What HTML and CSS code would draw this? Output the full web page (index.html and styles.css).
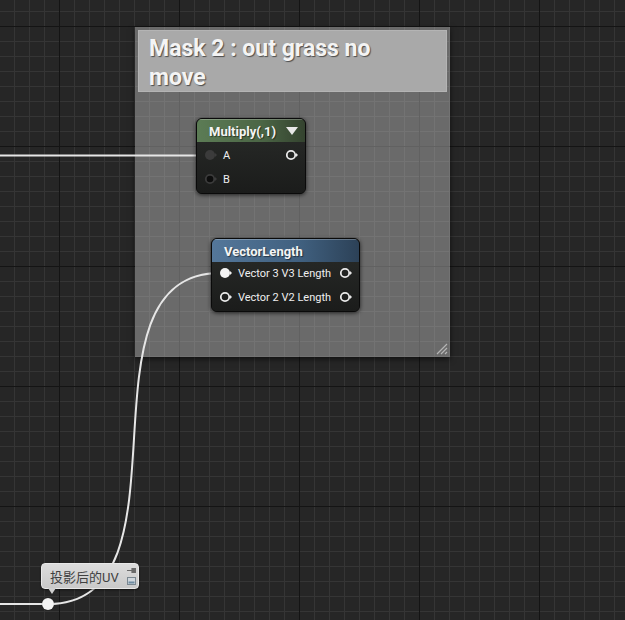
FILE: index.html
```html
<!DOCTYPE html>
<html>
<head>
<meta charset="utf-8">
<link rel="stylesheet" href="styles.css">
</head>
<body>
<div class="canvas">
  <div class="comment">
    <div class="comment-head">Mask 2 : out grass no move</div>
    <svg class="grip" width="14" height="12" viewBox="0 0 14 12">
      <path d="M13 1 L3 11 M13 5 L7 11 M13 9 L11 11" stroke="#b5b5b5" stroke-width="1.2"/>
    </svg>
  </div>

  <svg class="wires" width="625" height="620" viewBox="0 0 625 620">
    <path d="M0 155.5 L205 155.5" stroke="#e6e6e6" stroke-width="2" fill="none"/>
    <path d="M0 604 L48 604" stroke="#e6e6e6" stroke-width="2" fill="none"/>
    <path d="M48 604 C 200 604, 68 273, 220 273" stroke="#e6e6e6" stroke-width="2" fill="none"/>
  </svg>

  <div class="node multiply">
    <div class="node-head green">
      <span>Multiply(,1)</span>
      <svg width="12" height="9" viewBox="0 0 12 9"><path d="M0 0 L12 0 L6 8 Z" fill="#e8e8e8"/></svg>
    </div>
    <div class="node-body body-low">
      <div class="row">
        <div class="pin-label">
          <svg class="pin" width="14" height="12" viewBox="0 0 14 12"><circle cx="6" cy="6" r="5" fill="#3b3b3b"/><path d="M11 4 L13 6 L11 8 Z" fill="#3b3b3b"/></svg>
          <span>A</span>
        </div>
        <svg class="pin" width="14" height="12" viewBox="0 0 14 12"><circle cx="6" cy="6" r="4.2" fill="none" stroke="#e8e8e8" stroke-width="1.8"/><path d="M11 4 L13 6 L11 8 Z" fill="#e8e8e8"/></svg>
      </div>
      <div class="row">
        <div class="pin-label">
          <svg class="pin" width="14" height="12" viewBox="0 0 14 12"><circle cx="6" cy="6" r="4.2" fill="#0d0d0d" stroke="#3b3b3b" stroke-width="1.8"/><path d="M11 4 L13 6 L11 8 Z" fill="#3b3b3b"/></svg>
          <span>B</span>
        </div>
      </div>
    </div>
  </div>

  <div class="node vlength">
    <div class="node-head blue">
      <span>VectorLength</span>
    </div>
    <div class="node-body">
      <div class="row">
        <div class="pin-label">
          <svg class="pin" width="14" height="12" viewBox="0 0 14 12"><circle cx="6" cy="6" r="5" fill="#f2f2f2"/><path d="M11 4 L13 6 L11 8 Z" fill="#f2f2f2"/></svg>
          <span>Vector 3 V3 Length</span>
        </div>
        <svg class="pin" width="14" height="12" viewBox="0 0 14 12"><circle cx="6" cy="6" r="4.2" fill="none" stroke="#e8e8e8" stroke-width="1.8"/><path d="M11 4 L13 6 L11 8 Z" fill="#e8e8e8"/></svg>
      </div>
      <div class="row">
        <div class="pin-label">
          <svg class="pin" width="14" height="12" viewBox="0 0 14 12"><circle cx="6" cy="6" r="4.2" fill="none" stroke="#e8e8e8" stroke-width="1.8"/><path d="M11 4 L13 6 L11 8 Z" fill="#e8e8e8"/></svg>
          <span>Vector 2 V2 Length</span>
        </div>
        <svg class="pin" width="14" height="12" viewBox="0 0 14 12"><circle cx="6" cy="6" r="4.2" fill="none" stroke="#e8e8e8" stroke-width="1.8"/><path d="M11 4 L13 6 L11 8 Z" fill="#e8e8e8"/></svg>
      </div>
    </div>
  </div>

  <div class="bubble">
    <span class="bubble-text">投影后的UV</span>
    <div class="bubble-icons">
      <svg width="9" height="7" viewBox="0 0 9 7"><path d="M0 3.5 L5 3.5 M5 1 L5 6 M6 1.5 L8.5 1.5 L8.5 5.5 L6 5.5 Z" stroke="#6a6a6a" stroke-width="1.2" fill="#6a6a6a"/></svg>
      <svg width="9" height="8" viewBox="0 0 9 8"><rect x="0.5" y="0.5" width="8" height="7" fill="#cfd6dc" stroke="#7a8790"/><rect x="1.5" y="4.5" width="6" height="2" fill="#6d8aa0"/></svg>
    </div>
    <span class="bubble-tail"></span>
  </div>
  <div class="reroute"></div>
</div>
</body>
</html>
```

FILE: styles.css
```css
html, body {
  margin: 0;
  padding: 0;
}
body {
  width: 625px;
  height: 620px;
  overflow: hidden;
  font-family: Roboto, "Liberation Sans", "Noto Sans CJK SC", sans-serif;
  background-color: #262626;
  background-image:
    linear-gradient(to right, #141414 1px, transparent 1px),
    linear-gradient(to bottom, #141414 1px, transparent 1px),
    linear-gradient(to right, #353535 1px, transparent 1px),
    linear-gradient(to bottom, #353535 1px, transparent 1px);
  background-size: 120px 120px, 120px 120px, 15px 15px, 15px 15px;
  background-position: 59px 0, 0 26px, 14px 0, 0 11px;
}
.canvas {
  position: relative;
  width: 625px;
  height: 620px;
}
.comment {
  position: absolute;
  left: 135px;
  top: 27px;
  width: 315px;
  height: 330px;
  box-sizing: border-box;
  padding: 3px;
  background: rgba(190, 190, 190, 0.45);
  box-shadow: 0 2px 6px rgba(0, 0, 0, 0.6);
}
.comment-head {
  height: 62px;
  box-sizing: border-box;
  padding: 3px 60px 0 10px;
  background: #a9a9a9;
  border: 1px solid #b4b4b4;
  color: #f4f4f4;
  font-weight: bold;
  font-size: 23px;
  line-height: 29px;
  text-shadow: 1px 1px 1px rgba(0, 0, 0, 0.55);
}
.grip {
  position: absolute;
  right: 2px;
  bottom: 2px;
}
.wires {
  position: absolute;
  left: 0;
  top: 0;
}
.node {
  position: absolute;
  display: flex;
  flex-direction: column;
  background: #1e1f1e;
  border: 1px solid #0a0a0a;
  border-radius: 6px;
  box-shadow: 0 1px 4px rgba(0, 0, 0, 0.7);
  overflow: hidden;
  color: #ececec;
}
.multiply {
  left: 196px;
  top: 118px;
  width: 110px;
  height: 76px;
  box-sizing: border-box;
}
.vlength {
  left: 211px;
  top: 238px;
  width: 149px;
  height: 74px;
  box-sizing: border-box;
}
.node-head {
  height: 22px;
  display: flex;
  align-items: center;
  justify-content: space-between;
  padding: 0 7px 0 12px;
  font-weight: bold;
  font-size: 13px;
  color: #f4f4f4;
  text-shadow: 1px 1px 1px rgba(0, 0, 0, 0.5);
  border-top: 1px solid rgba(255, 255, 255, 0.25);
}
.green {
  background: linear-gradient(to right, #5c7c55 0%, #4b6545 60%, #34432f 100%);
}
.blue {
  background: linear-gradient(to right, #54779a 0%, #40607f 60%, #2c4157 100%);
}
.node-body {
  flex: 1;
  display: flex;
  flex-direction: column;
  padding: 5px 6px 0 7px;
  gap: 12px;
  background: linear-gradient(to bottom, #252725, #1b1c1b);
}
.body-low {
  padding-top: 7px;
}
.row {
  display: flex;
  align-items: center;
  justify-content: space-between;
  height: 12px;
}
.pin-label {
  display: flex;
  align-items: center;
  gap: 5px;
  font-size: 11px;
  color: #efefef;
}
.pin {
  display: block;
}
.bubble {
  position: absolute;
  left: 41px;
  top: 563px;
  width: 98px;
  height: 26px;
  box-sizing: border-box;
  display: flex;
  align-items: center;
  justify-content: space-between;
  padding: 0 2px 0 8px;
  background: linear-gradient(to bottom, #dcdcdc, #c9c9c9);
  border: 1px solid #e8e8e8;
  border-radius: 4px;
  box-shadow: 0 1px 2px rgba(0, 0, 0, 0.5);
}
.bubble-text {
  font-size: 13px;
  color: #404040;
}
.bubble-icons {
  display: flex;
  flex-direction: column;
  align-self: flex-start;
  gap: 3px;
  padding-top: 3px;
}
.bubble-icons svg {
  display: block;
}
.bubble-tail {
  position: absolute;
  left: 6px;
  bottom: -6px;
  width: 0;
  height: 0;
  border-left: 4px solid transparent;
  border-right: 4px solid transparent;
  border-top: 6px solid #cfcfcf;
}
.reroute {
  position: absolute;
  left: 42px;
  top: 598px;
  width: 12px;
  height: 12px;
  border-radius: 50%;
  background: #f4f4f4;
  box-shadow: 0 0 1px rgba(0, 0, 0, 0.6);
}
```
